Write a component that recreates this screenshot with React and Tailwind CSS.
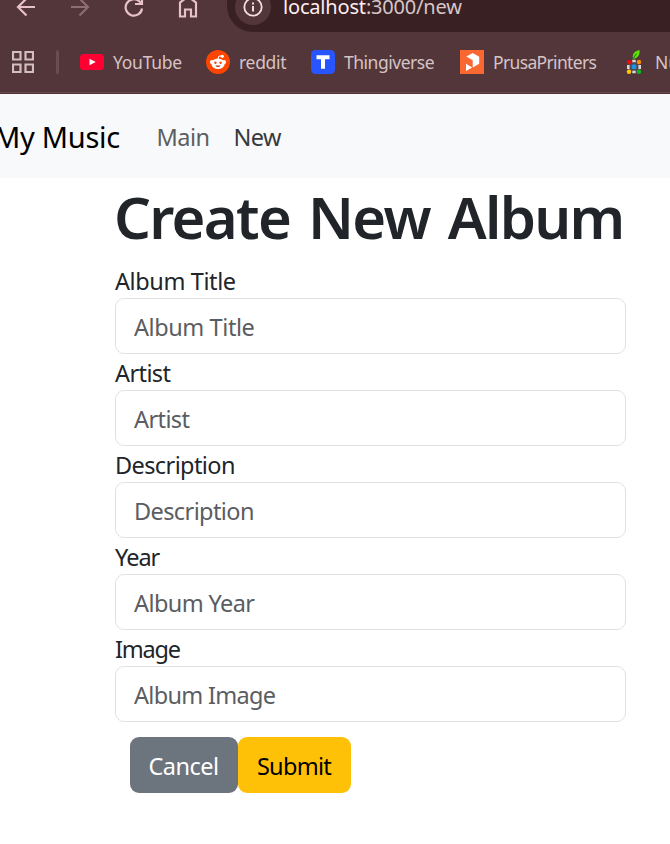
import React from "react";

const fields = [
  { label: "Album Title", placeholder: "Album Title", l: "tracking-[-0.4px]", p: "tracking-[-0.42px]" },
  { label: "Artist", placeholder: "Artist", l: "tracking-[-0.6px]", p: "tracking-[-0.6px]" },
  { label: "Description", placeholder: "Description", l: "tracking-[-0.6px]", p: "tracking-[-0.6px]" },
  { label: "Year", placeholder: "Album Year", l: "tracking-[-1px]", p: "tracking-[-0.6px]" },
  { label: "Image", placeholder: "Album Image", l: "tracking-[-1.2px]", p: "tracking-[-0.7px]" },
];

function Toolbar() {
  return (
    <div className="flex h-8 items-start overflow-hidden text-[#e8c1c6]">
      <svg className="h-8 w-[227px] shrink-0" viewBox="0 0 227 32" fill="none" stroke="currentColor" strokeWidth="2.2">
        <path d="M35 7H18.5M26.5 -1.5L18 7L26.5 15.5" />
        <path d="M71 7H87.5M79.500 -1.500L88 7L79.500 15.500" stroke="#8e6d71" />
        <path d="M142 8.500A8.200 8.200 0 1 1 139.500 1.500L142 4M142 -3V4H135" />
        <path d="M180 16.500V2.500L188 -3.500L196 2.500V16.500H191V9.500H185V16.500Z" />
      </svg>
      <div className="-mt-5 flex h-[52px] flex-1 items-start rounded-bl-[26px] bg-[#382023] pl-2">
        <div className="mt-[9px] flex h-9 w-9 items-center justify-center rounded-full bg-[#523639]">
          <svg className="h-5 w-5 text-[#f3dfe1]" viewBox="0 0 20 20" fill="none" stroke="currentColor" strokeWidth="1.800">
            <circle cx="10" cy="10" r="8.700" />
            <path d="M10 9V14.500M10 5.500V7.500" strokeWidth="2" />
          </svg>
        </div>
        <div className="mt-[13px] ml-[12px] whitespace-nowrap text-[20px] leading-7 tracking-[-0.18px] text-[#d7c6c8]">
          <span className="text-[#ffedef]">localhost</span>:3000/new
        </div>
      </div>
    </div>
  );
}

function Bookmarks() {
  return (
    <div className="flex h-[60px] items-center overflow-hidden whitespace-nowrap pl-3 text-[17.5px] leading-6 text-[#d6c3c5]">
      <svg className="h-[22px] w-[22px] shrink-0" viewBox="0 0 22 22" fill="none" stroke="#d3bfc1" strokeWidth="2.2">
        <path d="M1 1H8.500V8.500H1ZM13.500 1H21V8.500H13.500ZM1 13.500H8.500V21H1ZM13.500 13.500H21V21H13.500Z" />
      </svg>
      <div className="ml-[22px] h-6 w-[3px] shrink-0 rounded-full bg-[#6b4c50]" />
      <div className="ml-[21px] flex w-[126px] shrink-0 items-center">
        <svg className="h-4 w-6 shrink-0" viewBox="0 0 24 16">
          <rect width="24" height="16" rx="3.500" fill="#ff0033" />
          <path d="M9.500 4.700L15.700 8L9.500 11.300Z" fill="#fff" />
        </svg>
        <span className="ml-[9px] tracking-[-0.25px]">YouTube</span>
      </div>
      <div className="flex w-[105px] shrink-0 items-center">
        <svg className="h-6 w-6 shrink-0" viewBox="0 0 24 24">
          <circle cx="12" cy="12" r="12" fill="#ff4500" />
          <path d="M12 9L13 6L16 6" stroke="#fff" strokeWidth="1" fill="none" />
          <circle cx="16.300" cy="6.300" r="1.600" fill="#fff" />
          <circle cx="5.800" cy="12" r="1.900" fill="#fff" />
          <circle cx="18.200" cy="12" r="1.900" fill="#fff" />
          <ellipse cx="12" cy="13.800" rx="6.700" ry="5.200" fill="#fff" />
          <circle cx="9.400" cy="12.800" r="1.200" fill="#ff4500" />
          <circle cx="14.600" cy="12.800" r="1.200" fill="#ff4500" />
          <path d="M9.500 15.500H14.500C13.700 17.500 10.300 17.500 9.500 15.500Z" fill="#a04a35" />
        </svg>
        <span className="ml-[9px] tracking-[-0.3px]">reddit</span>
      </div>
      <div className="flex w-[149px] shrink-0 items-center">
        <svg className="h-6 w-6 shrink-0" viewBox="0 0 24 24">
          <rect width="24" height="24" rx="4.500" fill="#2855ff" />
          <path d="M5.500 5.300H18.500V9.300H14V18.800H10V9.300H5.500Z" fill="#fff" />
        </svg>
        <span className="ml-[9px] tracking-[-0.48px]">Thingiverse</span>
      </div>
      <div className="flex w-[163px] shrink-0 items-center">
        <svg className="h-6 w-6 shrink-0" viewBox="0 0 24 24">
          <rect width="24" height="24" fill="#fa6831" />
          <path d="M6.300 6.500L12.700 3L19.200 6.700V13.800L12.700 17.500V10.300Z M6 13.700L12.200 17.500L6 21Z" fill="#fff" />
        </svg>
        <span className="ml-[9px] tracking-[-0.65px]">PrusaPrinters</span>
      </div>
      <div className="flex shrink-0 items-center">
        <svg className="h-6 w-6 shrink-0" viewBox="0 0 24 24">
          <path d="M10 9C9 3 12 1 16.500 0C17 5 15 8 10 9Z" fill="#5fe00b" />
          <path d="M9.500 9.500L13.500 3.500" stroke="#20780a" strokeWidth="1" />
          <rect x="5" y="11" width="12" height="12" fill="#55484b" />
          <path d="M9.300 11H12.700M9.300 22H12.700M5.300 15V19M16.700 15V19" stroke="#ddd5d9" strokeWidth="2.6" />
          <circle cx="11" cy="16.800" r="2.500" fill="#1593ef" />
          <circle cx="6" cy="12" r="2.200" fill="#f20909" />
          <circle cx="16" cy="12" r="2.200" fill="#ff8d05" />
          <circle cx="6" cy="21.700" r="2.200" fill="#ffcb00" />
          <circle cx="16" cy="21.700" r="2.200" fill="#05bd1b" />
        </svg>
        <span className="ml-2">Nu</span>
      </div>
    </div>
  );
}

export default function App() {
  return (
    <div className="h-[844px] w-[670px] overflow-hidden bg-white font-['Noto_Sans','Open_Sans',sans-serif] text-[#212529]">
      <header className="h-[94px] border-b border-[#50363a] bg-[#523639]">
        <div className="h-[93px] border-b border-[#66494d]">
          <Toolbar />
          <Bookmarks />
        </div>
      </header>
      <nav className="flex h-[84px] items-center whitespace-nowrap bg-[#f8f9fa]">
        <span className="-ml-[6px] w-[162.5px] pt-0.5 text-[29px] tracking-[-0.28px] text-black">My Music</span>
        <span className="w-[77px] pt-1 text-[23.5px] tracking-[-0.5px] text-[#5c5f62]">Main</span>
        <span className="pt-1 text-[23.5px] tracking-[-0.6px] text-[#37393b]">New</span>
      </nav>
      <main className="ml-[115px] w-[511px]">
        <h1 className="-ml-px mb-3 h-[72px] whitespace-nowrap text-[58px] font-semibold leading-[78px] tracking-[-1.7px] [word-spacing:4.5px]">Create New Album</h1>
        {fields.map((f) => (
          <label key={f.label} className="block">
            <span className={`block h-9 text-[23.5px] leading-[38px] ${f.l}`}>{f.label}</span>
            <input
              className={`block h-14 w-full rounded-[9px] border border-[#dee2e6] bg-white px-[18px] pt-0.5 text-[23.5px] placeholder:text-[#5a5d61] placeholder:opacity-100 ${f.p}`}
              placeholder={f.placeholder}
            />
          </label>
        ))}
        <div className="ml-[15px] mt-[15px] flex h-14 text-[23.5px]">
          <button className="w-[108px] rounded-[9px] bg-[#6c757d] pt-[3px] pr-px tracking-[-0.5px] text-white">Cancel</button>
          <button className="w-[113px] rounded-[9px] bg-[#ffc107] pt-[3px] pr-px tracking-[-0.7px] text-black">Submit</button>
        </div>
      </main>
    </div>
  );
}
